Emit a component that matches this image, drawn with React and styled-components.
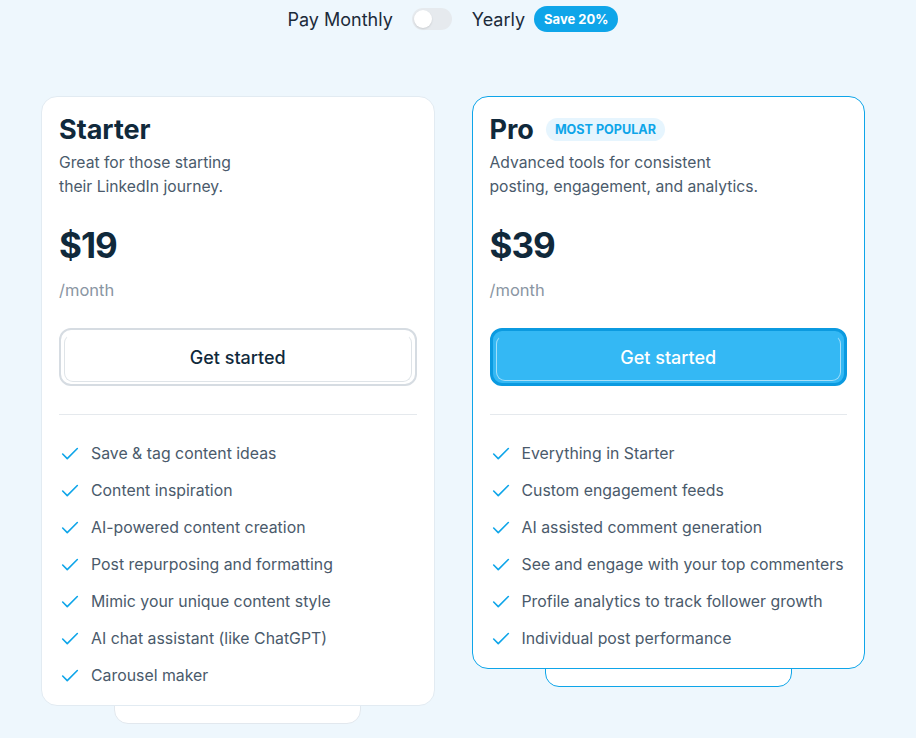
import { styled, createGlobalStyle } from 'styled-components';
import { Check } from 'lucide-react';

const GlobalStyle = createGlobalStyle`
	html, body {
		margin: 0;
		padding: 0;
		background: #eef7fd;
		font-family: Inter, 'Noto Sans', sans-serif;
		-webkit-font-smoothing: antialiased;
	}
`;

const Page = styled.div`
	width: 824px;
	padding: 6px 0 0 41px;
	min-height: 732px;
`;

const BillingRow = styled.div`
	display: flex;
	align-items: center;
	justify-content: center;
	height: 26px;
	margin-bottom: 64px;
	font-size: 18px;
	color: #1c2b3a;
`;

const Switch = styled.div`
	width: 40px;
	height: 22px;
	border-radius: 11px;
	background: #e6eaee;
	margin: 0 20px 0 19px;
	display: flex;
	align-items: center;
	padding: 0 2px;
	box-sizing: border-box;
	&::before {
		content: '';
		width: 18px;
		height: 18px;
		border-radius: 50%;
		background: #ffffff;
		box-shadow: 0 1px 2px rgba(0, 0, 0, 0.12);
	}
`;

const SaveBadge = styled.span`
	margin-left: 9px;
	height: 26px;
	padding: 0 10px;
	border-radius: 13px;
	background: #0ea5e9;
	color: #ffffff;
	font-size: 13px;
	font-weight: 700;
	display: flex;
	align-items: center;
`;

const Plans = styled.div`
	display: flex;
	align-items: flex-start;
	gap: 37px;
`;

const PlanStack = styled.div`
	flex: 1;
	display: flex;
	flex-direction: column;
	align-items: center;
`;

const Card = styled.div`
	position: relative;
	z-index: 1;
	align-self: stretch;
	background: #ffffff;
	border: 1px solid ${({ $featured }) => ($featured ? '#0ea5e9' : '#e2ebf2')};
	border-radius: 16px;
	padding: 17px 17px 17px 17px;
`;

const BackTab = styled.div`
	width: 247px;
	height: 36px;
	margin-top: -18px;
	background: #ffffff;
	border: 1px solid ${({ $featured }) => ($featured ? '#0ea5e9' : '#e2e8ee')};
	border-radius: 14px;
	box-sizing: border-box;
`;

const TitleRow = styled.div`
	display: flex;
	align-items: center;
	gap: 12px;
	height: 30px;
`;

const Title = styled.h2`
	margin: 0;
	font-size: 27px;
	font-weight: 700;
	color: #10293b;
`;

const PopularBadge = styled.span`
	height: 23px;
	padding: 0 9px;
	border-radius: 12px;
	background: #e6f5fe;
	color: #0ea5e9;
	font-size: 12.6px;
	font-weight: 700;
	display: flex;
	align-items: center;
`;

const Description = styled.p`
	margin: 7px 0 0;
	font-size: 15.7px;
	line-height: 24px;
	color: #4a5a6b;
`;

const Price = styled.div`
	margin-top: 24px;
	font-size: 35px;
	line-height: 44px;
	font-weight: 700;
	letter-spacing: -1px;
	color: #10293b;
`;

const Period = styled.div`
	margin-top: 11px;
	font-size: 16.5px;
	line-height: 24px;
	color: #8a96a3;
`;

const StartButton = styled.button`
	position: relative;
	margin-top: 26px;
	width: 100%;
	height: 58px;
	border-radius: 12px;
	font-family: inherit;
	font-size: 18px;
	font-weight: 500;
	cursor: pointer;
	border: ${({ $featured }) => ($featured ? '3px solid #0b9ae0' : '2px solid #d6dce2')};
	background: ${({ $featured }) => ($featured ? '#34b8f4' : '#ffffff')};
	color: ${({ $featured }) => ($featured ? '#ffffff' : '#10293b')};
	&::after {
		content: '';
		position: absolute;
		left: 3px;
		right: 3px;
		top: 4px;
		bottom: 2px;
		border-radius: 9px;
		border: 1px solid ${({ $featured }) => ($featured ? 'rgba(255,255,255,0.55)' : '#dfe4e8')};
		border-top-color: transparent;
		pointer-events: none;
	}
`;

const Divider = styled.hr`
	margin: 28px 0 0;
	border: none;
	border-top: 1px solid #e5e9ed;
`;

const Features = styled.ul`
	list-style: none;
	margin: 27px 0 0;
	padding: 0;
	display: flex;
	flex-direction: column;
	gap: 13px;
`;

const Feature = styled.li`
	display: flex;
	align-items: center;
	gap: 10px;
	font-size: 15.85px;
	line-height: 24px;
	color: #4a5a6b;
	svg {
		flex-shrink: 0;
		color: #0ea5e9;
	}
`;

const plans = [
	{
		name: 'Starter',
		description: ['Great for those starting', 'their LinkedIn journey.'],
		price: '$19',
		features: [
			'Save & tag content ideas',
			'Content inspiration',
			'AI-powered content creation',
			'Post repurposing and formatting',
			'Mimic your unique content style',
			'AI chat assistant (like ChatGPT)',
			'Carousel maker',
		],
	},
	{
		name: 'Pro',
		featured: true,
		description: ['Advanced tools for consistent', 'posting, engagement, and analytics.'],
		price: '$39',
		features: [
			'Everything in Starter',
			'Custom engagement feeds',
			'AI assisted comment generation',
			'See and engage with your top commenters',
			'Profile analytics to track follower growth',
			'Individual post performance',
		],
	},
];

function PlanCard({ plan }) {
	return (
		<PlanStack>
			<Card $featured={plan.featured}>
				<TitleRow>
					<Title>{plan.name}</Title>
					{plan.featured && <PopularBadge>MOST POPULAR</PopularBadge>}
				</TitleRow>
				<Description>
					{plan.description[0]}
					<br />
					{plan.description[1]}
				</Description>
				<Price>{plan.price}</Price>
				<Period>/month</Period>
				<StartButton $featured={plan.featured}>Get started</StartButton>
				<Divider />
				<Features>
					{plan.features.map((f) => (
						<Feature key={f}>
							<Check size={22} strokeWidth={1.75} />
							{f}
						</Feature>
					))}
				</Features>
			</Card>
			<BackTab $featured={plan.featured} />
		</PlanStack>
	);
}

export default function App() {
	return (
		<>
			<GlobalStyle />
			<Page>
				<BillingRow>
					<span>Pay Monthly</span>
					<Switch />
					<span>Yearly</span>
					<SaveBadge>Save 20%</SaveBadge>
				</BillingRow>
				<Plans>
					{plans.map((p) => (
						<PlanCard key={p.name} plan={p} />
					))}
				</Plans>
			</Page>
		</>
	);
}
